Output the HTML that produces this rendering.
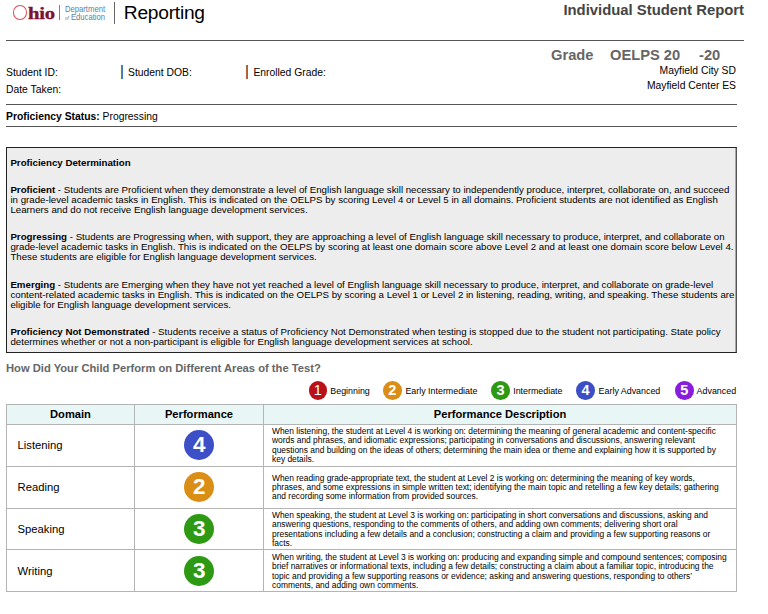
<!DOCTYPE html>
<html lang="en">
<head>
<meta charset="utf-8">
<title>Individual Student Report</title>
<style>
*{box-sizing:border-box;margin:0;padding:0}
html,body{width:768px;height:614px;background:#fff;overflow:hidden}
body{font-family:"Liberation Sans",Arial,Helvetica,sans-serif;color:#000;position:relative}
.abs{position:absolute;white-space:nowrap}
.hr{position:absolute;height:1px;background:#555}
.vbar{position:absolute;width:1px;background:#444}
/* logo */
.logo-o{position:absolute;left:13px;top:5px;width:14px;height:14.5px;border:1px solid #dc4a5c;border-radius:50%}
.logo-hio{left:27.6px;top:2.2px;font-family:"Liberation Serif","Times New Roman",serif;font-weight:700;font-size:17.5px;line-height:22px;color:#7a1230;letter-spacing:-0.2px;-webkit-text-stroke:0.35px #7a1230;transform:scaleX(1.18);transform-origin:0 0}
.logo-bar{position:absolute;left:59px;top:5px;width:1px;height:15px;background:#de5a68}
.logo-dept{left:64.5px;top:4.6px;font-size:8.4px;line-height:9px;color:#5b7fa6;transform:scaleX(.915);transform-origin:0 0}
.logo-edu{left:64.5px;top:12.8px;font-size:8.4px;line-height:9px;color:#5b7fa6;transform:scaleX(.915);transform-origin:0 0}
.logo-edu i{font-size:5px}
.reporting{left:123.8px;top:0px;font-size:19.2px;letter-spacing:-0.25px;line-height:25px;color:#000}
.isr{right:24px;top:0;font-size:14.85px;font-weight:700;line-height:20px;color:#444}
.grade{font-size:14.7px;font-weight:700;line-height:18px;color:#666;top:46px}
.sm{font-size:10.35px;line-height:13px}
.pipe{font-size:15px;line-height:20px;color:#222}
/* box */
.box{position:absolute;left:6px;top:147px;width:731px;height:206px;border:1px solid #222;border-right-color:#555;box-shadow:inset -1px 0 0 #a8a8a8;background:#ededed;font-size:9.71px;line-height:10px;padding:0 0 0 4px}
.box p{position:absolute;left:3.4px;white-space:nowrap}
.q{left:6px;top:361px;font-size:11.2px;font-weight:700;color:#666;line-height:14px}
.leg{position:absolute;top:381.2px;width:18.6px;height:18.6px;border-radius:50%;color:#fff;font-weight:700;font-size:14.5px;line-height:18.6px;text-align:center}
.leg.c1{font-weight:400}
.legt{top:386px;font-size:8.9px;line-height:11px}
table{position:absolute;left:6px;top:404px;width:731px;border-collapse:collapse;table-layout:fixed}
td,th{border:1px solid #b4b4b4;vertical-align:middle}
th{background:#e8f6f6;height:20px;font-size:11.15px;font-weight:700;text-align:center;padding-bottom:1px}
td{height:42px}
.r3 td{height:41px}
.r3 td.d,.r4 td.d{padding-bottom:0}
.r3 .c,.r4 .c{top:0}
.r3 td.t{padding-top:1.4px}
.r4 td.t{padding-top:2px}
td.d{font-size:11.25px;padding-left:10.6px;padding-bottom:2px}
td.p{text-align:center}
td.t{font-size:8.42px;line-height:9.3px;padding-left:8px;white-space:nowrap}
.c{position:relative;left:.3px;top:-.6px;display:inline-block;width:30px;height:30px;border-radius:50%;color:#fff;font-weight:700;font-size:22.5px;line-height:30px;text-align:center;vertical-align:middle}
.c1{background:#b9101a}.c2{background:#da8e16}.c3{background:#2e9a14}.c4{background:#3c4fc6}.c5{background:#8a1ddb}
</style>
</head>
<body>
<!-- header -->
<div class="logo-o"></div>
<div class="abs logo-hio">hio</div>
<div class="logo-bar"></div>
<div class="abs logo-dept">Department</div>
<div class="abs logo-edu"><i>of</i> Education</div>
<div class="vbar" style="left:114px;top:2px;height:22px;background:#666"></div>
<div class="abs reporting">Reporting</div>
<div class="abs isr">Individual Student Report</div>
<div class="hr" style="left:6px;top:40px;width:738px"></div>

<div class="abs grade" style="left:551px">Grade</div>
<div class="abs grade" style="left:610px">OELPS 20</div>
<div class="abs grade" style="left:699px">-20</div>
<div class="abs sm" style="right:32px;top:64px">Mayfield City SD</div>
<div class="abs sm" style="right:32px;top:79px">Mayfield Center ES</div>

<div class="abs sm" style="left:6px;top:66px">Student ID:</div>
<div class="abs pipe" style="left:120px;top:61px">|</div>
<div class="abs sm" style="left:128px;top:66px">Student DOB:</div>
<div class="abs pipe" style="left:245px;top:61px">|</div>
<div class="abs sm" style="left:253.4px;top:66px">Enrolled Grade:</div>
<div class="abs sm" style="left:6px;top:83px">Date Taken:</div>
<div class="hr" style="left:6px;top:104px;width:731px"></div>
<div class="abs sm" style="left:6px;top:110px"><b>Proficiency Status:</b> Progressing</div>
<div class="hr" style="left:6px;top:126px;width:731px"></div>

<!-- determination box -->
<div class="box">
<p style="top:10px"><b>Proficiency Determination</b></p>
<p style="top:37px"><b>Proficient</b> - Students are Proficient when they demonstrate a level of English language skill necessary to independently produce, interpret, collaborate on, and succeed<br>in grade-level academic tasks in English. This is indicated on the OELPS by scoring Level 4 or Level 5 in all domains. Proficient students are not identified as English<br>Learners and do not receive English language development services.</p>
<p style="top:84px"><b>Progressing</b> - Students are Progressing when, with support, they are approaching a level of English language skill necessary to produce, interpret, and collaborate on<br>grade-level academic tasks in English. This is indicated on the OELPS by scoring at least one domain score above Level 2 and at least one domain score below Level 4.<br>These students are eligible for English language development services.</p>
<p style="top:131.5px"><b>Emerging</b> - Students are Emerging when they have not yet reached a level of English language skill necessary to produce, interpret, and collaborate on grade-level<br>content-related academic tasks in English. This is indicated on the OELPS by scoring a Level 1 or Level 2 in listening, reading, writing, and speaking. These students are<br>eligible for English language development services.</p>
<p style="top:178.5px"><b>Proficiency Not Demonstrated</b> - Students receive a status of Proficiency Not Demonstrated when testing is stopped due to the student not participating. State policy<br>determines whether or not a non-participant is eligible for English language development services at school.</p>
</div>

<div class="abs q">How Did Your Child Perform on Different Areas of the Test?</div>

<!-- legend -->
<div class="leg c1" style="left:308.5px">1</div><div class="abs legt" style="left:330.3px">Beginning</div>
<div class="leg c2" style="left:383px">2</div><div class="abs legt" style="left:405.4px">Early Intermediate</div>
<div class="leg c3" style="left:491.3px">3</div><div class="abs legt" style="left:513.2px">Intermediate</div>
<div class="leg c4" style="left:576.3px">4</div><div class="abs legt" style="left:598.6px">Early Advanced</div>
<div class="leg c5" style="left:675.1px">5</div><div class="abs legt" style="left:696.6px">Advanced</div>

<!-- table -->
<table>
<colgroup><col style="width:128px"><col style="width:129px"><col></colgroup>
<tr><th>Domain</th><th>Performance</th><th>Performance Description</th></tr>
<tr><td class="d">Listening</td><td class="p"><span class="c c4">4</span></td><td class="t">When listening, the student at Level 4 is working on: determining the meaning of general academic and content-specific<br>words and phrases, and idiomatic expressions; participating in conversations and discussions, answering relevant<br>questions and building on the ideas of others; determining the main idea or theme and explaining how it is supported by<br>key details.</td></tr>
<tr><td class="d">Reading</td><td class="p"><span class="c c2">2</span></td><td class="t">When reading grade-appropriate text, the student at Level 2 is working on: determining the meaning of key words,<br>phrases, and some expressions in simple written text; identifying the main topic and retelling a few key details; gathering<br>and recording some information from provided sources.</td></tr>
<tr class="r3"><td class="d">Speaking</td><td class="p"><span class="c c3">3</span></td><td class="t">When speaking, the student at Level 3 is working on: participating in short conversations and discussions, asking and<br>answering questions, responding to the comments of others, and adding own comments; delivering short oral<br>presentations including a few details and a conclusion; constructing a claim and providing a few supporting reasons or<br>facts.</td></tr>
<tr class="r4"><td class="d">Writing</td><td class="p"><span class="c c3">3</span></td><td class="t">When writing, the student at Level 3 is working on: producing and expanding simple and compound sentences; composing<br>brief narratives or informational texts, including a few details; constructing a claim about a familiar topic, introducing the<br>topic and providing a few supporting reasons or evidence; asking and answering questions, responding to others&rsquo;<br>comments, and adding own comments.</td></tr>
</table>
</body>
</html>
